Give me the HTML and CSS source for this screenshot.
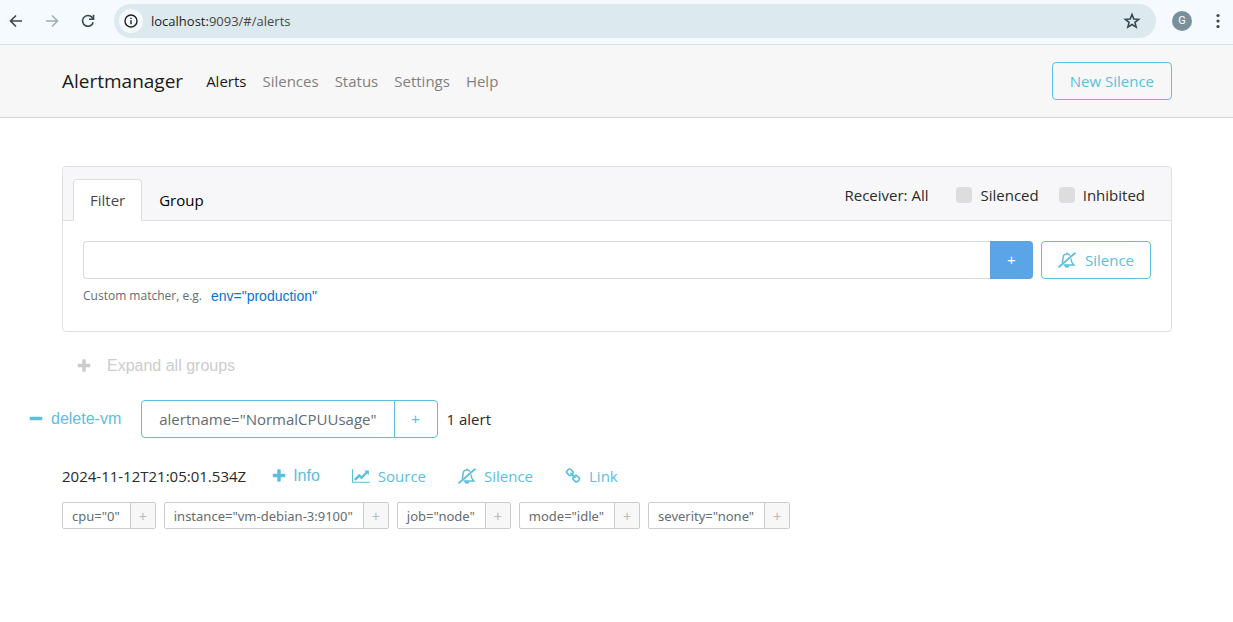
FILE: index.html
```html
<!DOCTYPE html>
<html lang="en">
<head>
<meta charset="utf-8">
<title>Alertmanager</title>
<link rel="stylesheet" href="styles.css">
</head>
<body>
<svg class="sprite" aria-hidden="true">
  <symbol id="plus" viewBox="0 0 1792 1792"><path d="M1600 736v192q0 40-28 68t-68 28h-416v416q0 40-28 68t-68 28h-192q-40 0-68-28t-28-68v-416h-416q-40 0-68-28t-28-68v-192q0-40 28-68t68-28h416v-416q0-40 28-68t68-28h192q40 0 68 28t28 68v416h416q40 0 68 28t28 68z"/></symbol>
  <symbol id="minus" viewBox="0 0 1792 1792"><path d="M1600 736v192q0 40-28 68t-68 28h-1216q-40 0-68-28t-28-68v-192q0-40 28-68t68-28h1216q40 0 68 28t28 68z"/></symbol>
  <symbol id="chart" viewBox="0 0 2048 1792"><path d="M2048 1536v128h-2048v-1536h128v1408h1920zm-128-1248v435q0 21-19.500 29.500t-35.500-7.500l-121-121-633 633q-10 10-23 10t-23-10l-233-233-416 416-192-192 585-585q10-10 23-10t23 10l233 233 464-464-121-121q-16-16-7.500-35.500t29.500-19.500h435q14 0 23 9t9 23z"/></symbol>
  <symbol id="chain" viewBox="0 0 1792 1792"><path d="M1520 1216q0-40-28-68l-208-208q-28-28-68-28-42 0-72 32 3 3 19 18.500t21.500 21.500 15 19 13 25.500 3.500 27.500q0 40-28 68t-68 28q-15 0-27.500-3.500t-25.500-13-19-15-21.500-21.500-18.500-19q-33 31-33 73 0 40 28 68l206 207q27 27 68 27 40 0 68-26l147-146q28-28 28-67zm-703-705q0-40-28-68l-206-207q-28-28-68-28-39 0-68 27l-147 146q-28 28-28 67 0 40 28 68l208 208q27 27 68 27 42 0 72-31-3-3-19-18.500t-21.500-21.500-15-19-13-25.500-3.500-27.500q0-40 28-68t68-28q15 0 27.500 3.500t25.500 13 19 15 21.500 21.500 18.500 19q33-31 33-73zm895 705q0 120-85 203l-147 146q-83 83-203 83-121 0-204-85l-206-207q-83-83-83-203 0-123 88-209l-88-88q-86 88-208 88-120 0-204-84l-208-208q-84-84-84-204t85-203l147-146q83-83 203-83 121 0 204 85l206 207q83 83 83 203 0 123-88 209l88 88q86-88 208-88 120 0 204 84l208 208q84 84 84 204z"/></symbol>
  <symbol id="bell-off" viewBox="0 0 18 16"><path fill="none" stroke="currentColor" stroke-width="1.500" d="M4 10.500C4.800 9.200 5 7.800 5 6.200C5 3.700 6.600 2.100 9 2.100C10.400 2.100 11.500 2.700 12.200 3.600M13 6.500C13.100 9.500 14 11.300 15.700 12.900H5.500M9 .500V2"/><path d="M6.500 13.300h5a2.400 2.400 0 0 1-5 0z"/><path fill="none" stroke="currentColor" stroke-width="1.800" d="M.500 15.300L17.500.700"/></symbol>
</svg>

<div class="browser">
  <button class="chrome-btn" aria-label="Back"><svg viewBox="0 0 16 16"><path class="line" d="M14 8H3M8 2.500L2.500 8L8 13.500"/></svg></button>
  <button class="chrome-btn chrome-btn-off" aria-label="Forward"><svg viewBox="0 0 16 16"><path class="line" d="M2 8H13M8 2.500L13.500 8L8 13.500"/></svg></button>
  <button class="chrome-btn" aria-label="Reload"><svg viewBox="0 0 16 16"><path class="line" d="M13.200 9.200A5.400 5.400 0 1 1 12 4.300L13.300 5.700M13.500 1.800V6.300H9"/></svg></button>
  <div class="omnibox">
    <span class="site-info"><svg viewBox="0 0 16 16"><circle class="thin" cx="8" cy="8" r="6"/><path class="thin" d="M8 7.200V11.200M8 4.700V6.100"/></svg></span>
    <span class="url"><b>localhost:</b>9093/#/alerts</span>
    <button class="star" aria-label="Bookmark"><svg viewBox="0 0 16 16"><path class="thin" d="M8 2.200L9.600 6.200L13.900 6.500L10.600 9.200L11.700 13.400L8 11.100L4.300 13.400L5.400 9.200L2.100 6.500L6.400 6.200z"/></svg></button>
  </div>
  <span class="avatar">G</span>
  <button class="chrome-btn chrome-menu" aria-label="Menu"><svg viewBox="0 0 16 16"><circle cx="8" cy="2.500" r="1.600"/><circle cx="8" cy="8" r="1.600"/><circle cx="8" cy="13.500" r="1.600"/></svg></button>
</div>

<header class="navbar">
  <a class="brand" href="#">Alertmanager</a>
  <nav class="nav">
    <a class="active" href="#">Alerts</a>
    <a href="#">Silences</a>
    <a href="#">Status</a>
    <a href="#">Settings</a>
    <a href="#">Help</a>
  </nav>
  <button class="btn btn-new">New Silence</button>
</header>

<main class="content">
  <section class="card">
    <div class="card-header">
      <div class="tabs">
        <button class="tab tab-active">Filter</button>
        <button class="tab">Group</button>
      </div>
      <div class="options">
        <span>Receiver: All</span>
        <label class="check"><input type="checkbox">Silenced</label>
        <label class="check"><input type="checkbox">Inhibited</label>
      </div>
    </div>
    <div class="card-body">
      <div class="filter-row">
        <input class="filter-input" type="text" aria-label="Matcher">
        <button class="btn-add">+</button>
        <button class="btn btn-silence"><svg class="icon icon-wide"><use href="#bell-off"/></svg>Silence</button>
      </div>
      <div class="hint"><span>Custom matcher, e.g.</span><button class="hint-example">env="production"</button></div>
    </div>
  </section>

  <button class="expand"><svg class="icon"><use href="#plus"/></svg>Expand all groups</button>

  <div class="group">
    <button class="receiver"><svg class="icon"><use href="#minus"/></svg>delete-vm</button>
    <div class="matcher"><span>alertname="NormalCPUUsage"</span><button>+</button></div>
    <span>1 alert</span>
  </div>

  <div class="alert">
    <time>2024-11-12T21:05:01.534Z</time>
    <div class="actions">
      <button class="action action-info"><svg class="icon"><use href="#plus"/></svg>Info</button>
      <a class="action" href="#"><svg class="icon icon-wide"><use href="#chart"/></svg>Source</a>
      <a class="action" href="#"><svg class="icon icon-wide"><use href="#bell-off"/></svg>Silence</a>
      <a class="action" href="#"><svg class="icon"><use href="#chain"/></svg>Link</a>
    </div>
  </div>

  <div class="labels">
    <div class="label"><span>cpu="0"</span><button>+</button></div>
    <div class="label"><span>instance="vm-debian-3:9100"</span><button>+</button></div>
    <div class="label"><span>job="node"</span><button>+</button></div>
    <div class="label"><span>mode="idle"</span><button>+</button></div>
    <div class="label"><span>severity="none"</span><button>+</button></div>
  </div>
</main>
</body>
</html>
```
FILE: styles.css
```css
* { box-sizing: border-box; }
body {
  margin: 0;
  background: #fff;
  color: #292b2c;
  font: 15px/24px "Open Sans", "Noto Sans", sans-serif;
}
button { margin: 0; padding: 0; border: 0; background: none; font: inherit; color: inherit; cursor: pointer; }
a { color: inherit; text-decoration: none; }
svg { display: block; fill: currentColor; }
.sprite { display: none; }
.line { fill: none; stroke: currentColor; stroke-width: 1.6; }
.thin { fill: none; stroke: currentColor; stroke-width: 1.4; }
.icon { width: 16px; height: 16px; flex: none; }
.icon-wide { width: 18px; }

.browser {
  display: flex;
  align-items: center;
  height: 45px;
  padding: 0 7px 3px 8px;
  background: #f4fafd;
  border-bottom: 1px solid #d9e3e7;
  color: #37474f;
}
.chrome-btn { width: 16px; margin-right: 20px; }
.chrome-btn-off { color: #a3adb0; }
.chrome-menu { margin: 0; }
.omnibox {
  flex: 1;
  display: flex;
  align-items: center;
  height: 34px;
  margin: 0 16px 0 -2px;
  padding: 0 15px 0 5px;
  border-radius: 17px;
  background: #dceaef;
}
.site-info { padding: 4px; border-radius: 50%; background: #f4fafd; color: #1f1f1f; }
.site-info svg { width: 16px; height: 16px; }
.url { flex: 1; margin-left: 8px; font-size: 13px; color: #474747; }
.url b { font-weight: 400; color: #1f1f1f; }
.star svg { width: 18px; height: 18px; }
.avatar {
  width: 20px;
  height: 20px;
  margin-right: 18px;
  border-radius: 50%;
  background: #78909c;
  color: #fff;
  font: 11px/20px Roboto, sans-serif;
  text-align: center;
}

.navbar {
  display: flex;
  align-items: center;
  height: 73px;
  padding: 0 61px 0 62px;
  background: #f7f7f7;
  border-bottom: 1px solid #d5d5d5;
}
.brand { font-size: 19px; color: #1a1a1a; }
.nav { display: flex; gap: 16px; margin-left: 23px; color: #808080; }
.nav .active { color: #1a1a1a; }
.btn {
  height: 38px;
  padding: 0 16px;
  border: 1px solid #5bc0de;
  border-radius: 4px;
  color: #5bc0de;
}
.btn-new { margin-left: auto; padding: 0 17px; }

.content { padding: 48px 61px 48px 62px; }
.card { border: 1px solid #dfdfdf; border-radius: 4px; }
.card-header {
  display: flex;
  justify-content: space-between;
  padding: 12px 26px 0 10px;
  background: #f7f7f9;
  border-bottom: 1px solid #dfdfdf;
  border-radius: 4px 4px 0 0;
}
.tabs { display: flex; margin-bottom: -1px; }
.tab { height: 42px; padding: 0 16px 2px; border: 1px solid transparent; border-bottom: 0; color: #000; }
.tab-active { background: #fff; border-color: #dddddd; border-radius: 4px 4px 0 0; color: #464a4c; }
.options { display: flex; align-items: center; height: 32px; gap: 20px; }
.options > span { margin-right: 8px; }
.check { display: flex; align-items: center; gap: 8px; }
.check input { appearance: none; width: 16px; height: 16px; margin: 0; border-radius: 4px; background: #ddd; }
.card-body { padding: 20px 20px 23px; }
.filter-row { display: flex; height: 38px; }
.filter-input {
  flex: 1;
  min-width: 0;
  padding: 0 12px;
  border: 1px solid #d9d9d9;
  border-right: 0;
  border-radius: 4px 0 0 4px;
  font: inherit;
}
.btn-add {
  width: 43px;
  margin-right: 8px;
  border-radius: 0 4px 4px 0;
  background: #5ba4e6;
  color: #fff;
  font-family: "Liberation Sans", sans-serif;
}
.btn-silence { display: flex; align-items: center; gap: 9px; }
.hint { display: flex; gap: 9px; margin-top: 5px; font-size: 12px; color: #636c72; }
.hint-example { font: 14px/24px "Liberation Sans", sans-serif; color: #0275d8; }

.expand, .receiver, .action { display: flex; align-items: center; }
.expand, .receiver, .action-info { font: 16px/24px "Liberation Sans", sans-serif; }
.expand { gap: 15px; margin: 22px 0 22px 14px; color: #ccc; }

.group { display: flex; align-items: center; gap: 9px; margin-left: -34px; }
.receiver { gap: 7px; margin-right: 11px; color: #5bc0de; }
.matcher { display: flex; height: 38px; border: 1px solid #5bc0de; border-radius: 4px; line-height: 36px; }
.matcher span { padding: 0 17px; color: #636c72; }
.matcher button { width: 43px; border-left: 1px solid #5bc0de; color: #5bc0de; font-family: "Liberation Sans", sans-serif; }

.alert { display: flex; margin-top: 26px; color: #292b2c; }
.actions { display: flex; gap: 32px; margin-left: 25px; color: #5bc0de; }
.action { gap: 8px; }
.action-info { gap: 6px; }

.labels { display: flex; flex-wrap: wrap; gap: 8px; margin-top: 14px; }
.label { display: flex; height: 27px; border: 1px solid #ccc; border-radius: 2px; font: 13px/26px "Noto Sans", sans-serif; }
.label span { padding: 0 10px 0 9px; color: #636c72; }
.label button { width: 25px; border-left: 1px solid #ccc; background: #f7f7f7; color: #bbb; font: 14px/24px "Liberation Sans", sans-serif; }
```
